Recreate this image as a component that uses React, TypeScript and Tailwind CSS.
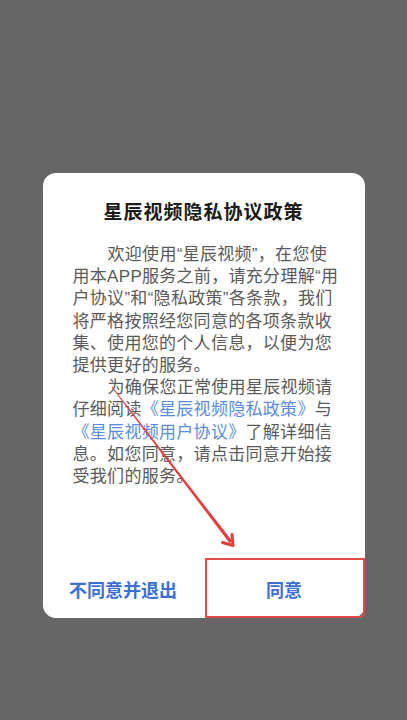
const font = { fontFamily: '"Liberation Sans", "Noto Sans CJK SC", sans-serif' };

function Arrow() {
  // annotation arrow drawn over the dialog
  return (
    <svg
      className="pointer-events-none absolute left-0 top-0"
      width="407"
      height="720"
      viewBox="0 0 407 720"
    >
      <polygon
        points="112.4,386.7 111.6,387.3 229.6,543.2 232,540.8"
        fill="#e53e3e"
      />
      <polyline
        points="222.5,542.5 233,545.5 232,534.5"
        fill="none"
        stroke="#e53e3e"
        strokeWidth="3"
        strokeLinecap="round"
        strokeLinejoin="round"
      />
    </svg>
  );
}

export default function App() {
  return (
    <div className="relative flex h-[720px] w-full justify-center bg-[#666666] pt-[173px]" style={font}>
      <div className="flex h-[445px] w-[322px] flex-col rounded-[13px] bg-white">
        <h1 className="pt-[26px] text-center text-[19px] font-bold leading-[28px] tracking-[1px] text-[#1c1c1c]">
          星辰视频隐私协议政策
        </h1>
        <div className="mt-[17px] pl-[30px] pr-[20px] text-[17px] leading-[22.2px] tracking-[0.3px] text-[#5a5a5a] whitespace-nowrap">
          <p className="indent-[35px]">
            欢迎使用“星辰视频”，在您使
            <br />
            用本APP服务之前，请充分理解“用
            <br />
            户协议”和“隐私政策”各条款，我们
            <br />
            将严格按照经您同意的各项条款收
            <br />
            集、使用您的个人信息，以便为您
            <br />
            提供更好的服务。
          </p>
          <p className="indent-[35px]">
            为确保您正常使用星辰视频请
            <br />
            仔细阅读<span className="text-[#5a8de0]">《星辰视频隐私政策》</span>与
            <br />
            <span className="text-[#5a8de0]">《星辰视频用户协议》</span>了解详细信
            <br />
            息。如您同意，请点击同意开始接
            <br />
            受我们的服务。
          </p>
        </div>
        <div className="mt-auto flex h-[58px]">
          <button className="flex flex-1 items-center justify-center pt-[4px] text-[18px] font-bold text-[#3b6fd4]">
            不同意并退出
          </button>
          <button className="relative flex flex-1 items-center justify-center pt-[4px] text-[18px] font-bold text-[#3b6fd4]">
            同意
            <span className="absolute -top-[2px] left-[1px] right-0 bottom-0 rounded-br-[6px] border-2 border-[#e24a4a]" />
          </button>
        </div>
      </div>
      <Arrow />
    </div>
  );
}
